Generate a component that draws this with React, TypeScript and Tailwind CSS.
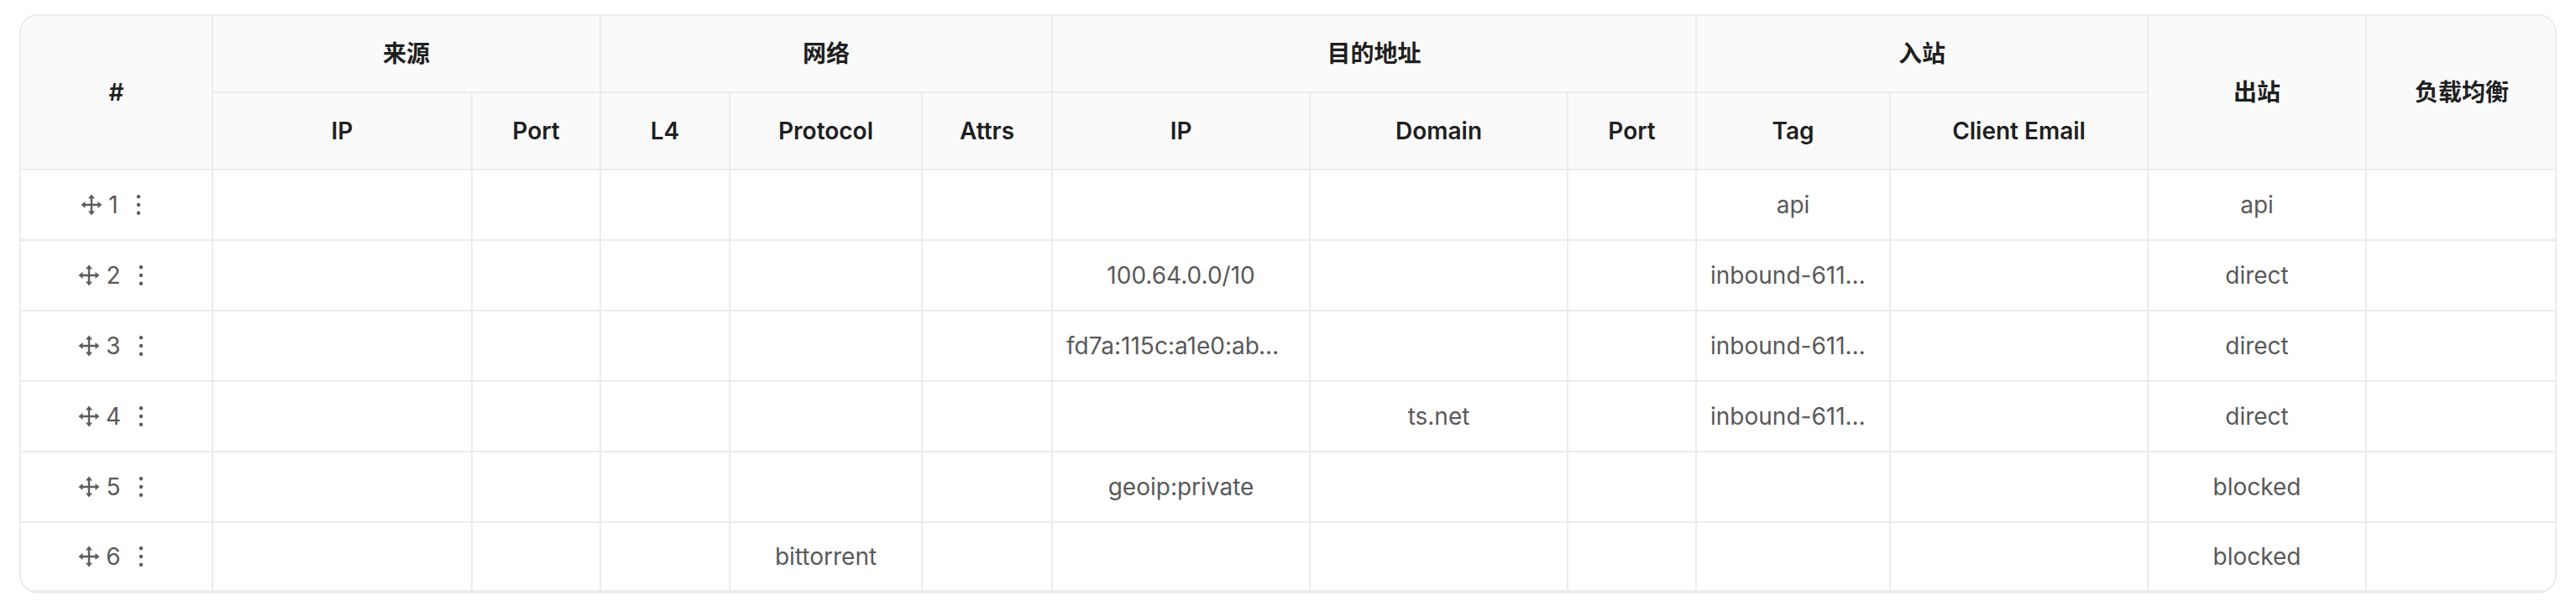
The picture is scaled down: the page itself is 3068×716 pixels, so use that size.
import React from "react";

const cols = [229, 309, 153, 154, 229, 155, 307, 307, 153, 231, 307, 260, 228];

type Row = {
  id: number;
  cells: string[];
};

// order: srcIP, srcPort, l4, protocol, attrs, dstIP, domain, dstPort, tag, email, outbound, balancer
const rows: Row[] = [
  { id: 1, cells: ["", "", "", "", "", "", "", "", "api", "", "api", ""] },
  { id: 2, cells: ["", "", "", "", "", "100.64.0.0/10", "", "", "inbound-61111-tun", "", "direct", ""] },
  { id: 3, cells: ["", "", "", "", "", "fd7a:115c:a1e0:ab12::/64", "", "", "inbound-61111-tun", "", "direct", ""] },
  { id: 4, cells: ["", "", "", "", "", "", "ts.net", "", "inbound-61111-tun", "", "direct", ""] },
  { id: 5, cells: ["", "", "", "", "", "geoip:private", "", "", "", "", "blocked", ""] },
  { id: 6, cells: ["", "", "", "bittorrent", "", "", "", "", "", "", "blocked", ""] },
];

function DragIcon() {
  return (
    <svg width="26" height="26" viewBox="0 0 26 26" className="text-[#5c5c5c]">
      <path d="M13 4v18M4 13h18" stroke="currentColor" strokeWidth="2.4" />
      <path d="M13 0.5l4 5h-8z" fill="currentColor" />
      <path d="M13 25.5l4-5h-8z" fill="currentColor" />
      <path d="M0.5 13l5-4v8z" fill="currentColor" />
      <path d="M25.5 13l-5-4v8z" fill="currentColor" />
    </svg>
  );
}

function MoreIcon() {
  return (
    <svg width="24" height="24" viewBox="0 0 24 24" className="text-[#5c5c5c]">
      <circle cx="12" cy="2.2" r="2.2" fill="currentColor" />
      <circle cx="12" cy="12" r="2.2" fill="currentColor" />
      <circle cx="12" cy="21.8" r="2.2" fill="currentColor" />
    </svg>
  );
}

const th =
  "border-r-2 border-b-2 border-[#ececec] bg-[#fafafa] px-4 text-center font-semibold text-[#1f1f1f]";
const td = "border-r-2 border-b-2 border-[#ececec] text-center text-[#595959]";

export default function App() {
  return (
    <div
      className="min-h-[716px] bg-white px-[23px] pt-[17px] text-[28px]"
      style={{ fontFamily: 'Inter, "Noto Sans CJK SC", sans-serif' }}
    >
      <div className="overflow-hidden rounded-[22px] border-2 border-[#ececec]">
        <table className="w-full table-fixed border-separate border-spacing-0">
          <colgroup>
            {cols.map((w, i) => (
              <col key={i} style={{ width: w }} />
            ))}
          </colgroup>
          <thead>
            <tr className="h-[92px]">
              <th rowSpan={2} className={th}>#</th>
              <th colSpan={2} className={th}>来源</th>
              <th colSpan={3} className={th}>网络</th>
              <th colSpan={3} className={th}>目的地址</th>
              <th colSpan={2} className={th}>入站</th>
              <th rowSpan={2} className={th}>出站</th>
              <th rowSpan={2} className={`${th} border-r-0`}>负载均衡</th>
            </tr>
            <tr className="h-[92px]">
              {["IP", "Port", "L4", "Protocol", "Attrs", "IP", "Domain", "Port", "Tag", "Client Email"].map(
                (h, i) => (
                  <th key={i} className={th}>
                    {h}
                  </th>
                )
              )}
            </tr>
          </thead>
          <tbody>
            {rows.map((r, ri) => {
              const last = ri === rows.length - 1;
              return (
                <tr key={r.id} className={last ? "h-[82px]" : "h-[84px]"}>
                  <td className={`${td} px-4 ${last ? "border-b-0" : ""}`}>
                    <div className="flex items-center justify-center pr-1">
                      <DragIcon />
                      <span className="ml-[7px]">{r.id}</span>
                      <span className="ml-3">
                        <MoreIcon />
                      </span>
                    </div>
                  </td>
                  {r.cells.map((c, ci) => {
                    const long = c.length > 14;
                    const pad = !long ? "px-4" : ci === 8 ? "pl-4 pr-6" : "pl-4 pr-8";
                    return (
                      <td
                        key={ci}
                        className={`${td} truncate ${pad} ${last ? "border-b-0" : ""} ${
                          ci === r.cells.length - 1 ? "border-r-0" : ""
                        }`}
                      >
                        {c}
                      </td>
                    );
                  })}
                </tr>
              );
            })}
          </tbody>
        </table>
      </div>
    </div>
  );
}
